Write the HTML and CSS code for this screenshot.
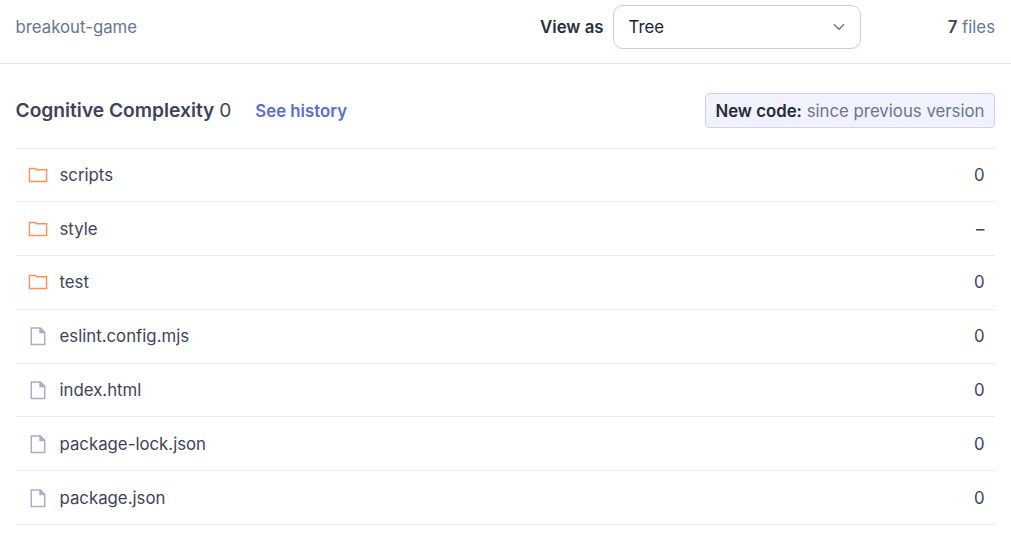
FILE: index.html
```html
<!DOCTYPE html>
<html lang="en">
<head>
<meta charset="utf-8">
<title>breakout-game</title>
<link rel="stylesheet" href="styles.css">
</head>
<body>
<svg width="0" height="0" class="defs">
  <symbol id="folder" viewBox="0 0 20 20"><path d="M1.4 3.5H7.5L8.6 4.8H18.6V16.5H1.4Z" fill="none" stroke="currentColor" stroke-width="1.4"/></symbol>
  <symbol id="file" viewBox="0 0 20 20"><path d="M3.3 1.9H12.3L16.7 6.3V18.4H3.3Z" fill="none" stroke="currentColor" stroke-width="1.5"/><path d="M11.3 1.5V7.2H17V6L12.5 1.5Z" fill="currentColor"/></symbol>
</svg>
<header class="topbar">
  <span class="project">breakout-game</span>
  <label class="view-label">View as</label>
  <div class="select"><span>Tree</span><svg class="chevron" viewBox="0 0 12 8"><path d="M1 1.2L6 6.2L11 1.2" fill="none" stroke="currentColor" stroke-width="1.4"/></svg></div>
  <span class="count"><b>7</b> files</span>
</header>
<main class="content">
  <div class="heading">
    <h1 class="metric">Cognitive Complexity <span class="value">0</span></h1>
    <a class="history">See history</a>
    <div class="badge"><b>New code:</b> since previous version</div>
  </div>
  <ul class="files">
    <li class="row"><svg class="icon folder"><use href="#folder"/></svg><span class="name">scripts</span><span>0</span></li>
    <li class="row"><svg class="icon folder"><use href="#folder"/></svg><span class="name">style</span><span>–</span></li>
    <li class="row"><svg class="icon folder"><use href="#folder"/></svg><span class="name">test</span><span>0</span></li>
    <li class="row"><svg class="icon file"><use href="#file"/></svg><span class="name">eslint.config.mjs</span><span>0</span></li>
    <li class="row"><svg class="icon file"><use href="#file"/></svg><span class="name">index.html</span><span>0</span></li>
    <li class="row"><svg class="icon file"><use href="#file"/></svg><span class="name">package-lock.json</span><span>0</span></li>
    <li class="row"><svg class="icon file"><use href="#file"/></svg><span class="name">package.json</span><span>0</span></li>
  </ul>
</main>
</body>
</html>
```
FILE: styles.css
```css
* { box-sizing: border-box; }
body { margin: 0; background: #fff; color: #3e4357; font: 16.8px/24px Inter, "Liberation Sans", sans-serif; overflow: hidden; }
b { font-weight: 600; }
.defs { display: block; }
.topbar { display: flex; align-items: center; height: 64px; padding: 0 16px 10px 15.5px; border-bottom: 1px solid #e1e6f3; color: #6a7590; }
.project { flex: 1; }
.view-label { margin-right: 9.5px; color: #2a2f40; font-weight: 600; }
.select { display: flex; align-items: center; justify-content: space-between; width: 248px; height: 44px; padding: 0 15px 0 14.5px; border: 1px solid #c5cde0; border-radius: 10px; color: #1b1d38; }
.chevron { width: 12px; height: 8px; color: #6a7590; }
.count { width: 134px; text-align: right; }
.count b { color: #3e4357; }
.content { padding: 0 16px 0 15.5px; }
.heading { display: flex; align-items: center; height: 83.5px; padding-top: 9px; }
.metric { margin: 0; font-size: 19.2px; font-weight: 600; }
.value { font-weight: 400; }
.history { margin: 1.5px 0 0 24px; color: #5d6cd0; font-weight: 600; }
.badge { margin-left: auto; height: 35px; padding: 0 9.5px 0 9px; border: 1px solid #ccd3fa; border-radius: 4px; background: #f1f2fd; color: #6a7590; line-height: 34px; }
.badge b { color: #252a3a; }
.files { margin: 0; padding: 0; list-style: none; border-top: 1px solid #ebebeb; }
.row { display: flex; align-items: center; height: 53.785px; padding: 0 10.5px 0 12.5px; border-bottom: 1px solid #ebebeb; }
.icon { width: 20px; height: 20px; margin-right: 11.5px; }
.icon.folder { color: #fd9259; }
.icon.file { color: #a5afc9; }
.name { flex: 1; }
```
